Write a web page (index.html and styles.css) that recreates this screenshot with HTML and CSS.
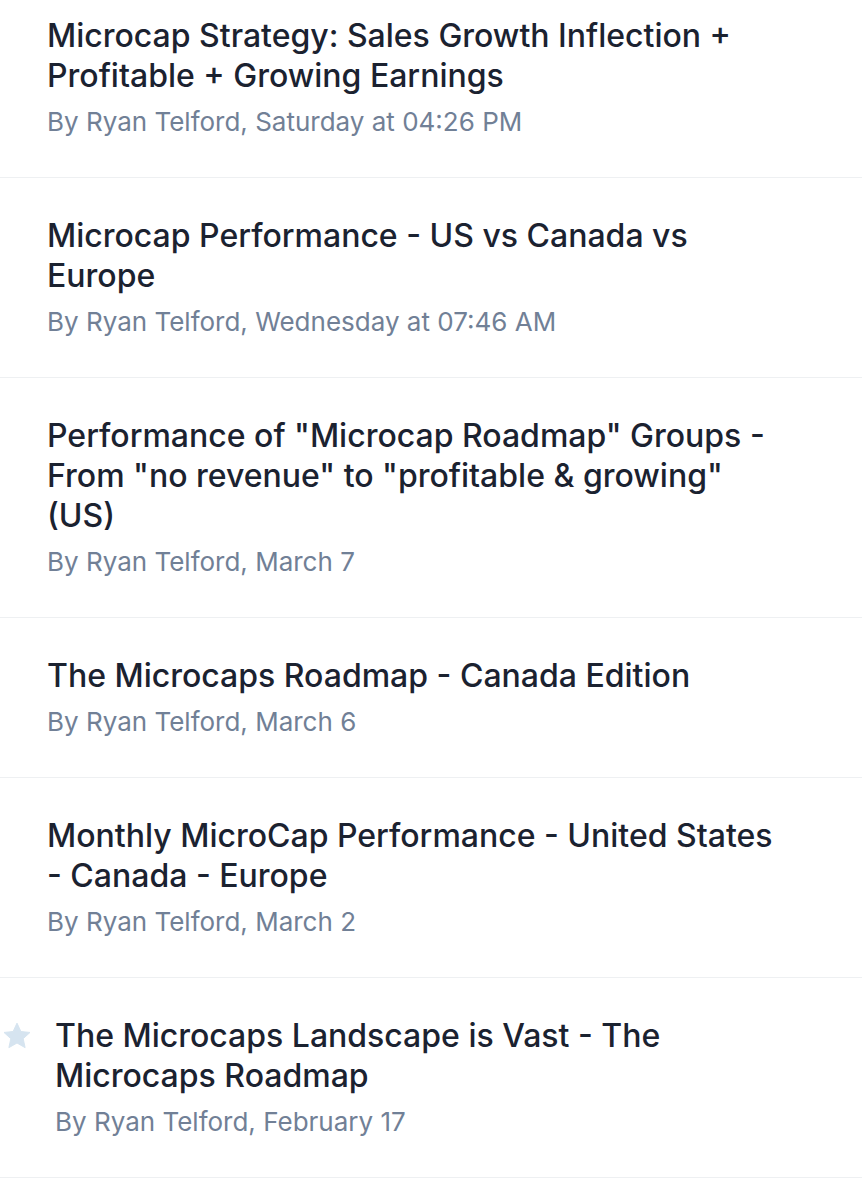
FILE: index.html
```html
<!DOCTYPE html>
<html>
<head>
<meta charset="utf-8">
<link rel="stylesheet" href="styles.css">
</head>
<body>
<ul class="topics">
  <li class="topic">
    <div class="topic-body">
      <a class="topic-title">Microcap Strategy: Sales Growth Inflection + Profitable + Growing Earnings</a>
      <div class="topic-meta">By Ryan Telford, Saturday at 04:26 PM</div>
    </div>
  </li>
  <li class="topic">
    <div class="topic-body">
      <a class="topic-title">Microcap Performance - US vs Canada vs Europe</a>
      <div class="topic-meta">By Ryan Telford, Wednesday at 07:46 AM</div>
    </div>
  </li>
  <li class="topic">
    <div class="topic-body">
      <a class="topic-title">Performance of "Microcap Roadmap" Groups - From "no revenue" to "profitable &amp; growing" (US)</a>
      <div class="topic-meta">By Ryan Telford, March 7</div>
    </div>
  </li>
  <li class="topic">
    <div class="topic-body">
      <a class="topic-title">The Microcaps Roadmap - Canada Edition</a>
      <div class="topic-meta">By Ryan Telford, March 6</div>
    </div>
  </li>
  <li class="topic">
    <div class="topic-body">
      <a class="topic-title">Monthly MicroCap Performance - United States - Canada - Europe</a>
      <div class="topic-meta">By Ryan Telford, March 2</div>
    </div>
  </li>
  <li class="topic topic-pinned">
    <svg class="pin-star" viewBox="1.3 1.6 21.4 20.4" width="26" height="25" aria-hidden="true">
      <path d="M12 1.6l3.2 6.9 7.5.8-5.6 5.1 1.6 7.4L12 18l-6.7 3.8 1.6-7.4L1.3 9.3l7.5-.8z" fill="#d6e4f0" stroke="#d6e4f0" stroke-width="0.8" stroke-linejoin="round"/>
    </svg>
    <div class="topic-body">
      <a class="topic-title">The Microcaps Landscape is Vast - The Microcaps Roadmap</a>
      <div class="topic-meta">By Ryan Telford, February 17</div>
    </div>
  </li>
</ul>
</body>
</html>
```
FILE: styles.css
```css
html, body {
  margin: 0;
  padding: 0;
  background: #ffffff;
}
body {
  font-family: Inter, "Noto Sans", "Liberation Sans", sans-serif;
  overflow: hidden;
}
.topics {
  list-style: none;
  margin: -22px 0 0 0;
  padding: 0;
}
.topic {
  display: flex;
  align-items: flex-start;
  padding: 38px 82px 39px 47px;
  border-bottom: 1px solid #eef0f2;
}
.topic-pinned {
  padding-left: 4px;
  gap: 25px;
}
.pin-star {
  flex: 0 0 26px;
  margin-top: 7px;
  overflow: visible;
}
.topic-body {
  flex: 1;
  min-width: 0;
}
.topic-title {
  display: block;
  font-size: 32px;
  line-height: 40px;
  font-weight: 500;
  color: #1b2230;
  text-decoration: none;
}
.topic-meta {
  margin-top: 10px;
  font-size: 26px;
  line-height: 32px;
  color: #718096;
}
```
